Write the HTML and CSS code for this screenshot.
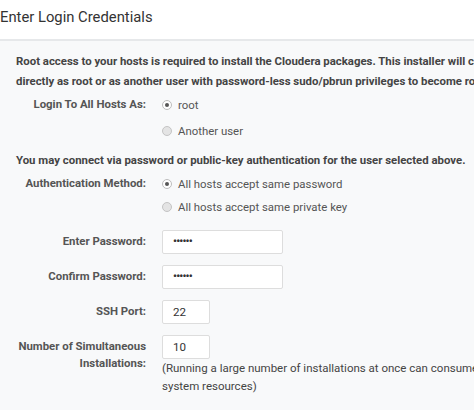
FILE: index.html
```html
<!DOCTYPE html>
<html lang="en">
<head>
  <meta charset="UTF-8">
  <title>Enter Login Credentials</title>
  <link rel="stylesheet" href="styles.css">
</head>
<body>
  <!-- Titulo -->
  <div class="header">
    <h1>Enter Login Credentials</h1>
  </div>

  <!-- Formulario -->
  <div class="panel">
    <p class="intro">Root access to your hosts is required to install the Cloudera packages. This installer will connect to your hosts via SSH and log in either directly as root or as another user with password-less sudo/pbrun privileges to become root.</p>

    <div class="row">
      <div class="label">Login To All Hosts As:</div>
      <div class="value">
        <label class="radio"><span class="dot checked"></span>root</label>
        <label class="radio"><span class="dot"></span>Another user</label>
      </div>
    </div>

    <p class="intro single">You may connect via password or public-key authentication for the user selected above.</p>

    <div class="row">
      <div class="label">Authentication Method:</div>
      <div class="value tight">
        <label class="radio"><span class="dot checked"></span>All hosts accept same password</label>
        <label class="radio"><span class="dot"></span>All hosts accept same private key</label>
      </div>
    </div>

    <div class="row field first">
      <div class="label">Enter Password:</div>
      <div class="value"><div class="input wide">&bull;&bull;&bull;&bull;&bull;&bull;</div></div>
    </div>
    <div class="row field">
      <div class="label">Confirm Password:</div>
      <div class="value"><div class="input wide">&bull;&bull;&bull;&bull;&bull;&bull;</div></div>
    </div>
    <div class="row field">
      <div class="label">SSH Port:</div>
      <div class="value"><div class="input small">22</div></div>
    </div>
    <div class="row field">
      <div class="label">Number of Simultaneous Installations:</div>
      <div class="value">
        <div class="input small">10</div>
        <div class="help">(Running a large number of installations at once can consume large amounts of network bandwidth and other system resources)</div>
      </div>
    </div>
  </div>
</body>
</html>
```

FILE: styles.css
```css
body {
  margin: 0;
  padding: 0;
  background: #fff;
  color: #333;
  font-family: Roboto, "Liberation Sans", sans-serif;
  overflow: hidden;
}

.header {
  height: 39px;
  border-bottom: 2px solid #e6e8ea;
}

.header h1 {
  margin: 0;
  padding-top: 6px;
  font-size: 14.8px;
  font-weight: normal;
  color: #333;
  line-height: 22px;
}

.panel {
  background: #f8f9fa;
  padding: 10px 0 15px 0;
  width: 900px;
}

.intro {
  margin: 0;
  padding-left: 16px;
  font-size: 11.4px;
  font-weight: bold;
  line-height: 20px;
  color: #444;
  width: 700px;
}

.intro.single {
  margin-top: 5px;
}

.row {
  display: flex;
  margin-top: 2px;
}

.label {
  width: 146px;
  flex-shrink: 0;
  text-align: right;
  font-size: 11.4px;
  font-weight: bold;
  color: #555;
  line-height: 17px;
  padding-top: 3px;
}

.value {
  margin-left: 16px;
  display: flex;
  flex-direction: column;
}

.radio {
  display: flex;
  align-items: center;
  height: 23px;
  font-size: 11.4px;
  color: #555;
  margin-bottom: 3px;
}

.tight .radio {
  margin-bottom: 0;
}

.dot {
  width: 10px;
  height: 10px;
  border: 1px solid #c4c4c4;
  border-radius: 50%;
  background: #e4e4e4;
  margin-right: 6px;
  box-sizing: border-box;
  position: relative;
}

.dot.checked {
  background: #fff;
  border-color: #bdbdbd;
}

.dot.checked::after {
  content: "";
  position: absolute;
  left: 2px;
  top: 2px;
  width: 4px;
  height: 4px;
  border-radius: 50%;
  background: #555;
}

.field {
  margin-top: 11px;
}

.field.first {
  margin-top: 12px;
}

.input {
  height: 24px;
  box-sizing: border-box;
  border: 1px solid #ddd;
  border-radius: 2px;
  background: #fff;
  font-size: 11.6px;
  color: #333;
  line-height: 22px;
  padding-left: 10px;
}

.input.wide {
  width: 121px;
  font-size: 11px;
  font-weight: bold;
  letter-spacing: -0.8px;
}

.input.small {
  width: 48px;
}

.help {
  font-size: 11.5px;
  color: #444;
  line-height: 18px;
  width: 585px;
}
```
